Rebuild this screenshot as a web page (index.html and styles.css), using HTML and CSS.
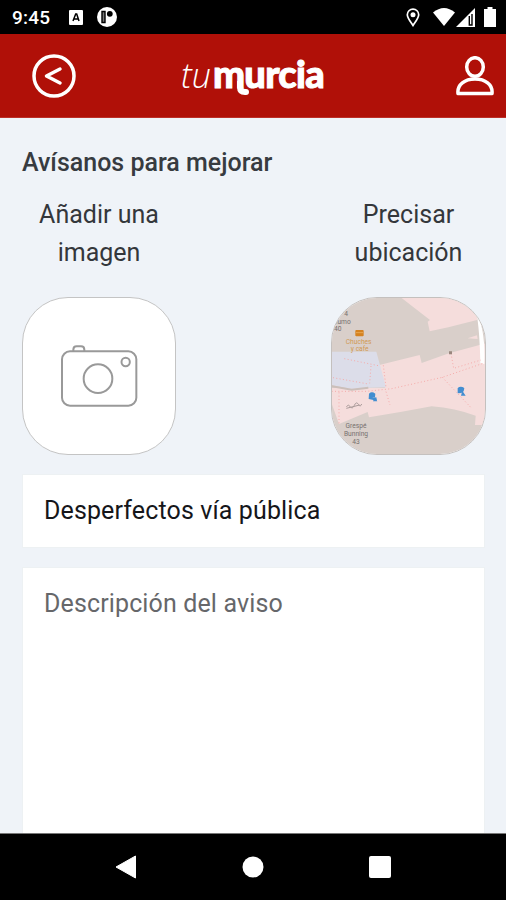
FILE: index.html
```html
<!DOCTYPE html>
<html lang="es">
<head>
<meta charset="utf-8">
<title>tumurcia</title>
<link rel="stylesheet" href="styles.css">
</head>
<body>
<div class="screen">
  <div class="status">
    <span class="time">9:45</span>
    <svg class="st-app" width="14" height="15" viewBox="0 0 14 15"><rect width="14" height="15" rx="1" fill="#fff"/><path d="M4 11 6.7 4h1L10 11M5 9h4" fill="none" stroke="#000" stroke-width="1.5"/></svg>
    <svg class="st-round" width="20" height="20" viewBox="0 0 20 20"><circle cx="10" cy="10" r="10" fill="#fff"/><path d="M5 4.5h3v11H5z" fill="#777" stroke="#000" stroke-width="1.4"/><circle cx="12.8" cy="6.8" r="2.9" fill="#000"/></svg>
    <svg class="st-pin" width="14" height="19" viewBox="0 0 14 19"><path d="M7 17.5C4 13 1.3 10 1.3 6.8a5.7 5.7 0 0 1 11.4 0C12.700 10 10 13 7 17.500Z" fill="none" stroke="#fff" stroke-width="1.7"/><circle cx="7" cy="6.700" r="2.500" fill="#fff"/></svg>
    <svg class="st-wifi" width="22" height="18" viewBox="0 0 22 18"><path d="M0 4.500Q11-4.500 22 4.500L11 18Z" fill="#fff"/></svg>
    <svg class="st-signal" width="19" height="19" viewBox="0 0 19 19"><path d="M0 19 19 0v19Z" fill="#fff"/><path d="M13.300 8v9h2.700V6" fill="none" stroke="#000" stroke-width="1.400"/></svg>
    <svg class="st-batt" width="12" height="20" viewBox="0 0 12 20"><path d="M3.500 0h5v2H12v18H0V2h3.500Z" fill="#fff"/></svg>
  </div>
  <header class="appbar">
    <svg class="back" width="44" height="44" viewBox="0 0 44 44"><circle cx="22" cy="22" r="20" /><path d="M28 15 14.500 22 28 29" /></svg>
    <div class="logo"><span class="tu">tu</span><span class="murcia">murcia</span><svg class="swash" width="16" height="16" viewBox="0 0 16 16"><path d="M3 0v6q0 5 5 5h1"/></svg></div>
    <svg class="user" width="38" height="40" viewBox="0 0 38 40"><ellipse cx="19" cy="11" rx="8.300" ry="9.300"/><path d="M2 37.500C1 28.500 9 23 19 23s18 5.500 17 14.500Z"/></svg>
  </header>
  <main class="content">
    <h1>Avísanos para mejorar</h1>
    <div class="pickers">
      <div class="picker">
        <p>Añadir una<br>imagen</p>
        <div class="tile">
          <svg viewBox="21 21 462 474"><g fill="none" stroke="#999" stroke-width="6"><rect x="141" y="184" width="223" height="163" rx="24"/><path d="M175 184v-5q0-10 10-10h13q10 0 10 10v5"/><circle cx="249" cy="266" r="43"/><circle cx="332" cy="216" r="12.500"/></g></svg>
        </div>
      </div>
      <div class="picker wide">
        <p>Precisar<br>ubicación</p>
        <div class="tile map">
          <svg viewBox="18 21 465 474">
            <rect x="18" y="21" width="465" height="474" fill="#d9cfca"/>
            <path d="M226 21H432L460 60 456 90 370 112 314 124 308 95 315 90Z" fill="#f5dddc"/>
            <path d="M160 226 284 195 290 219 372 190 483 160V405H450L452 377Q390 355 320 349L226 366 132 382 128 366 42 402 18 335V294H180Z" fill="#f5dddc"/>
            <path d="M18 185H154L183 292 130 293 80 297 18 285Z" fill="#dcdde9"/>
            <path d="M18 288 80 299 130 293" fill="none" stroke="#cbbfba" stroke-width="6"/>
            <path d="M454 65Q482 120 478 222L466 220Q464 120 454 65Z" fill="#fff"/>
            <path d="M428 145 456 136 458 147Z" fill="#f5dddc"/>
            <path d="M20 304H125L200 296 352 262 474 220M24 263 130 282M58 206 165 228M138 228 134 280M175 226 183 292M42 307V400M352 262 440 355M378 190 386 235 468 210M183 305 195 345" fill="none" stroke="#f5aaa9" stroke-width="3" stroke-dasharray="3 7"/>
            <rect x="91" y="120" width="25" height="19" rx="3" fill="#d58220"/>
            <path d="M93 128h21" stroke="#f1bd70" stroke-width="2"/>
            <path d="M372 184h9v9h-9z" fill="#99867d"/>
            <g fill="#438ed0"><path d="M132 311q8-8 19 0l-1 10-9 3 13-2 2 10-25-5ZM398 294q9-7 20 0l-2 10-7 5-11 1Z"/><circle cx="141" cy="314" r="6"/><path d="m149 322 8 12h-13ZM412 302l10 15h-14Z"/></g>
            <path d="M64 350q6-9 12 0t12-4 12-3 10-1M64 355l40-10" fill="none" stroke="#a99a99" stroke-width="3"/>
            <g class="map-label"><text x="63" y="79">4</text><text x="52" y="102">cumo</text><text x="38" y="124">40</text><text x="93" y="415">Grespé</text><text x="93" y="438">Bunning</text><text x="93" y="462">43</text></g>
            <g class="map-label orange"><text x="101" y="163">Chuches</text><text x="104" y="184">y cafe</text></g>
          </svg>
        </div>
      </div>
    </div>
    <div class="field">Desperfectos vía pública</div>
    <div class="field area">Descripción del aviso</div>
  </main>
  <nav class="navbar">
    <svg width="22" height="24" viewBox="0 0 22 24"><path d="M1 12 20.500 1v22Z" fill="#fff" stroke="#fff" stroke-linejoin="round"/></svg>
    <svg width="22" height="22" viewBox="0 0 22 22"><circle cx="11" cy="11" r="10.500" fill="#fff"/></svg>
    <svg width="22" height="22" viewBox="0 0 22 22"><rect width="22" height="22" rx="2" fill="#fff"/></svg>
  </nav>
</div>
</body>
</html>
```
FILE: styles.css
```css
* { box-sizing: border-box; }
body { margin: 0; font-family: Roboto, sans-serif; }
.screen { width: 506px; height: 900px; overflow: hidden; display: flex; flex-direction: column; background: #eff3f8; }
svg { display: block; flex: none; }
.status { flex: none; height: 34px; background: #000; color: #fff; display: flex; align-items: center; padding: 0 10px 0 12px; }
.time { font-size: 19px; font-weight: 500; width: 57px; letter-spacing: .2px; line-height: 34px; padding-top: 2px; }
.st-round { margin-left: 14px; }
.st-pin { margin-left: auto; }
.st-wifi { margin-left: 13px; }
.st-signal { margin-left: 1px; }
.st-batt { margin-left: 9px; }
.appbar { flex: none; height: 84px; background: #b01008; display: flex; align-items: center; padding: 0 12px 0 32px; border-bottom: 1px solid #bc3029; }
.back, .user, .swash { fill: none; stroke: #fff; stroke-width: 3.500; stroke-linecap: round; stroke-linejoin: round; }
.logo { position: relative; display: flex; align-items: baseline; margin: -3px 0 0 105px; color: #fff; white-space: nowrap; }
.tu { font: italic 300 34px/40px "Open Sans", sans-serif; width: 32px; }
.murcia { font: 900 38px/40px Lato, sans-serif; letter-spacing: -.7px; -webkit-text-stroke: 1px #fff; stroke-linejoin: round; }
.swash { position: absolute; left: 56px; top: 28px; stroke-width: 6; }
.user { margin-left: auto; }
.content { flex: 1; min-height: 0; padding: 0 21px 0 22px; overflow: hidden; }
h1 { margin: 28px 0 0; font-size: 25px; line-height: 34px; font-weight: 500; color: #373b40; white-space: nowrap; }
.pickers { display: flex; justify-content: space-between; margin: 16px -1px 0 0; }
.picker { width: 154px; }
.wide { width: 155px; }
.picker p { margin: 0 0 25px; font-size: 25px; line-height: 38px; text-align: center; color: #34373b; white-space: nowrap; }
.tile { height: 158px; border: 1px solid #c4c4c4; border-radius: 46px; background: #fff; overflow: hidden; }
.tile svg { width: 154px; height: 158px; margin: -1px; }
.map { border-color: #c4c0be; }
.map svg { width: 155px; }
.map-label { font: 20px Roboto, sans-serif; fill: #777170; text-anchor: middle; }
.orange { fill: #d19a55; }
.field { margin-top: 19px; height: 74px; background: #fff; border: 1px solid #edf1f3; padding: 17px 21px; font-size: 25px; line-height: 38px; letter-spacing: .13px; color: #15161a; white-space: nowrap; }
.area { margin-top: 19px; height: 300px; color: #66676a; }
.navbar { flex: none; height: 67px; background: #000; border-top: 1px solid #777; display: flex; align-items: center; justify-content: space-between; padding: 0 115px; }
```
